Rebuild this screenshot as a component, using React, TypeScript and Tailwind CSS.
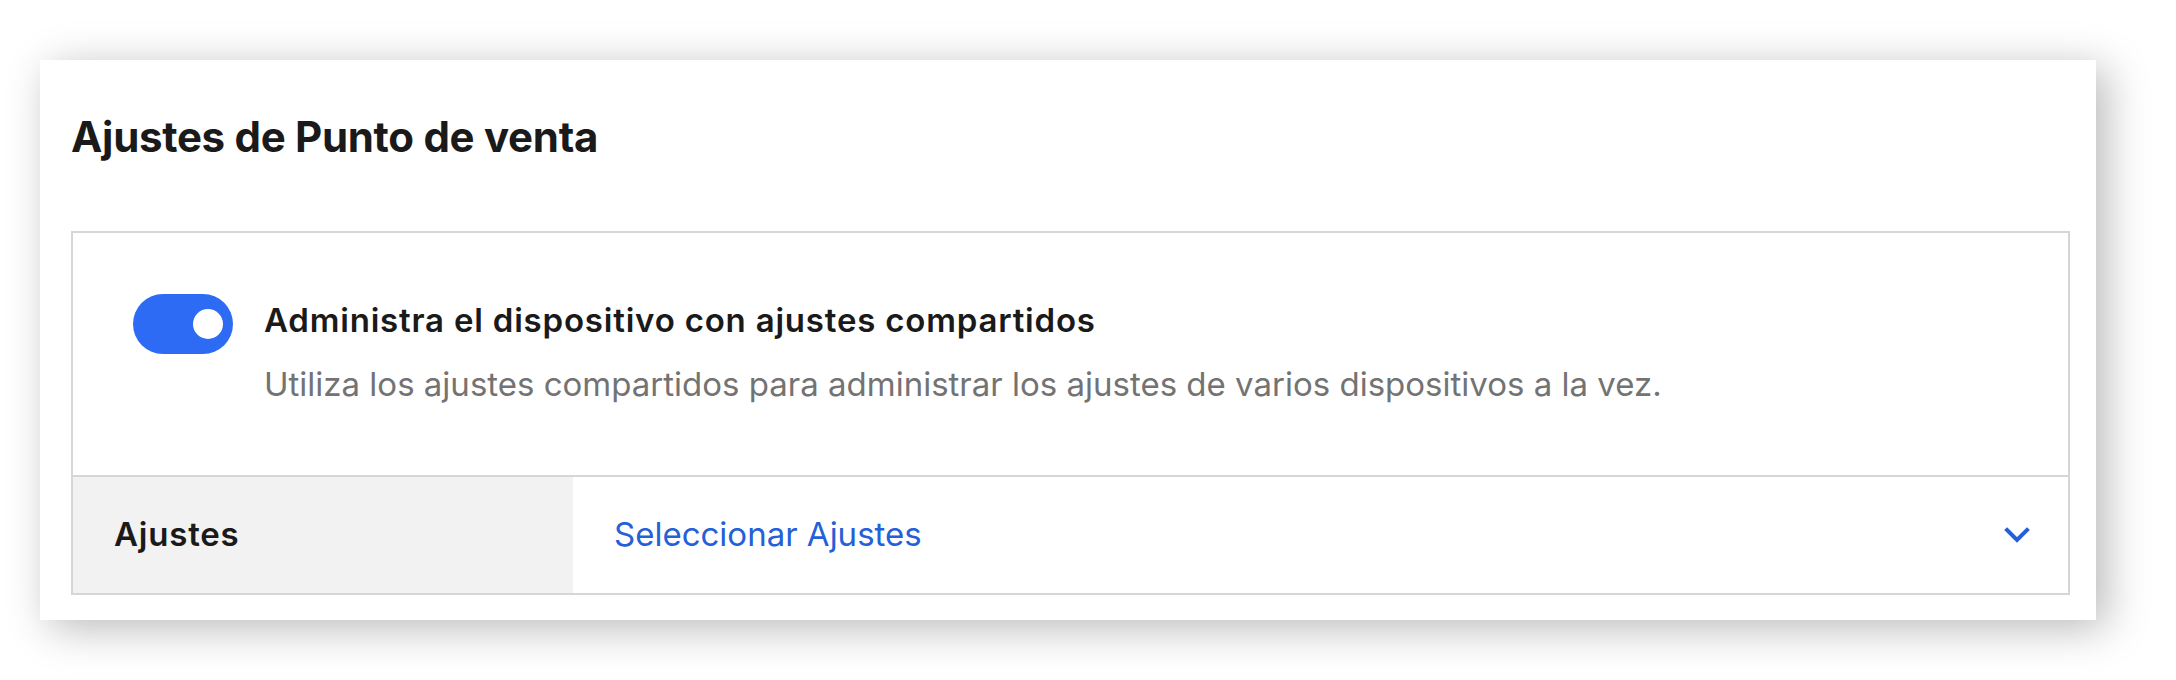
import { useState } from "react";

const font = { fontFamily: "Inter, 'Noto Sans', sans-serif" };

function Toggle({ on, onChange }: { on: boolean; onChange: () => void }) {
  return (
    <button
      onClick={onChange}
      className={`flex items-center w-[100px] h-[60px] rounded-full shrink-0 px-[10px] ${
        on ? "bg-[#2d6bf5] justify-end" : "bg-[#cfcfcf] justify-start"
      }`}
    >
      <span className="block w-[30px] h-[30px] rounded-full bg-white" />
    </button>
  );
}

export default function App() {
  const [shared, setShared] = useState(true);

  return (
    <div className="min-h-[680px] bg-white pt-[60px] pl-[40px]" style={font}>
      {/* Card */}
      <div className="w-[2056px] h-[560px] bg-white shadow-[10px_8px_40px_rgba(0,0,0,0.28)] pl-[31px] pr-[26px] pt-[52px]">
        <h1 className="text-[42px] leading-[50px] font-bold text-[#1a1a1a] tracking-[-0.3px]">
          Ajustes de Punto de venta
        </h1>

        {/* Settings box */}
        <div className="mt-[69px] border-2 border-[#d6d6d6]">
          <div className="flex items-start h-[242px] pl-[60px] pt-[61px] gap-[31px]">
            <Toggle on={shared} onChange={() => setShared(!shared)} />
            <div className="mt-[6px]">
              <div className="text-[33px] leading-[40px] font-semibold tracking-[0.8px] text-[#1a1a1a]">
                Administra el dispositivo con ajustes compartidos
              </div>
              <div className="mt-[24px] text-[33px] leading-[40px] text-[#737373]">
                Utiliza los ajustes compartidos para administrar los ajustes de varios dispositivos a la vez.
              </div>
            </div>
          </div>

          <div className="flex h-[118px] border-t-2 border-[#d6d6d6]">
            <div className="w-[500px] bg-[#f2f2f2] flex items-center pl-[41px] text-[33px] font-semibold tracking-[0.8px] text-[#1a1a1a]">
              Ajustes
            </div>
            <div className="flex-1 flex items-center justify-between pl-[41px] pr-[38px]">
              <span className="text-[33px] text-[#2460d8]">Seleccionar Ajustes</span>
              <svg width="26" height="18" viewBox="0 0 26 18" fill="none">
                <path d="M3 4 L13 14 L23 4" stroke="#2460d8" strokeWidth="4" strokeLinecap="square" />
              </svg>
            </div>
          </div>
        </div>
      </div>
    </div>
  );
}
